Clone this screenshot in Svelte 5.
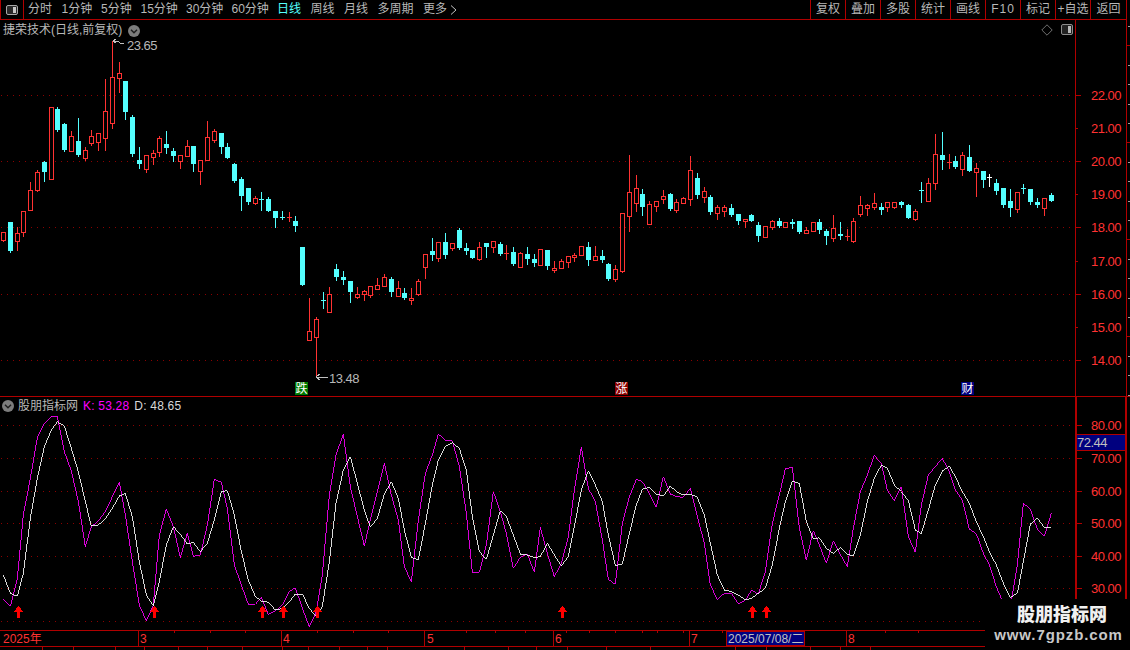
<script>
  const tabs = [
    { t: '分时', w: 24 }, { t: '1分钟', w: 30 }, { t: '5分钟', w: 30 }, { t: '15分钟', w: 36 },
    { t: '30分钟', w: 36 }, { t: '60分钟', w: 36 }, { t: '日线', w: 24, on: true }, { t: '周线', w: 24 },
    { t: '月线', w: 24 }, { t: '多周期', w: 36 }, { t: '更多', w: 24 }
  ];
  const tools = ['复权', '叠加', '多股', '统计', '画线', 'F10', '标记', '+自选', '返回'];

  // rows: [x, type, high, top, bottom, low], read at 3x from each region of the chart
  const seg = (ox, oy, rows) => rows.map(([x, t, h, a, b, l]) => ({
    x: Math.floor(ox + x / 3), t,
    h: Math.round(oy + h / 3), a: Math.round(oy + a / 3),
    b: Math.round(oy + b / 3), l: Math.round(oy + l / 3)
  }));
  const r = 'r', c = 'c', w = 'w';
  const candles = [
    ...seg(0, 40, [
      [10,r,576,576,600,603],[31,c,546,546,633,636],[52,r,562,580,602,630],[70,r,514,514,575,588],
      [91,r,427,451,509,509],[112,r,390,397,449,453],[133,c,363,366,396,423],[154,r,202,202,416,416],
      [172,c,201,207,270,273],[193,c,249,252,330,333],[214,r,273,289,332,332],[235,c,234,303,345,348],
      [256,r,321,331,353,360],[274,r,270,289,308,315],[295,r,279,280,305,330],[316,r,117,214,293,330],
      [337,r,3,112,250,264],[358,r,66,100,113,156],[376,c,123,123,216,237],[397,c,225,231,342,348],
      [418,c,321,360,372,384],[439,r,345,346,386,396],[460,r,330,340,351,372],[478,r,288,295,335,348],
      [499,c,273,312,324,339],[520,c,324,333,348,363],[541,r,345,346,364,384],[562,r,300,319,347,347],
      [580,c,318,318,372,393],[601,r,360,361,392,432],[622,r,243,292,360,360],[643,r,267,274,300,306],
      [664,c,279,279,321,339],[682,c,309,321,354,354],[703,c,369,372,423,426],[724,c,411,417,468,510],
      [745,c,444,444,486,492],[766,r,468,475,488,492],[784,c,456,477,480,510],[805,c,471,477,513,513],
      [826,c,513,513,534,561],[847,c,513,532,535,537],[868,r,516,532,535,543],[886,c,528,543,558,573]
    ]),
    ...seg(280, 180, [
      [67,c,201,201,315,315],[88,r,354,454,479,479],[109,r,411,418,470,590],[130,c,336,359,362,384],
      [148,r,321,343,395,395],[169,c,252,267,291,300],[190,c,273,291,300,312],[211,c,303,303,336,366],
      [232,r,321,343,351,354],[253,r,330,334,342,360],[271,r,318,319,344,351],[292,r,294,316,326,327],
      [313,r,282,292,317,318],[334,c,291,297,336,348],[355,r,303,325,347,348],[373,c,324,339,354,357],
      [394,r,324,355,361,372],[415,r,297,304,341,345],[436,r,222,223,260,294],[457,c,174,213,225,240],
      [475,r,186,187,233,243],[496,c,159,186,225,234],[517,r,189,190,203,210],[538,c,144,150,204,207],
      [559,c,189,204,213,222],[577,c,210,210,234,234],[598,r,186,202,236,240],[619,c,189,189,201,231],
      [640,r,183,184,201,216],[661,c,186,192,222,225],[679,r,195,220,223,237],[700,c,201,216,252,255],
      [721,r,216,220,260,261],[742,c,201,222,237,252],[763,c,222,237,249,258],[781,r,207,208,254,255],
      [802,c,210,210,258,267],[823,r,243,263,270,276],[844,r,237,244,263,264],[865,r,228,229,245,261],
      [883,r,219,224,230,243],[904,r,198,199,224,225],[925,c,186,201,240,255],[946,r,198,229,239,240],
      [967,c,210,228,240,246],[985,c,249,252,297,300],[1006,r,255,268,296,303],[1027,r,100,100,272,275]
    ]),
    ...seg(600, 120, [
      [88,r,105,217,287,333],[109,r,165,205,248,273],[127,c,207,222,261,285],[148,r,243,253,311,312],
      [169,r,243,244,258,273],[190,r,210,229,236,249],[211,c,219,222,267,270],[229,r,237,247,270,276],
      [250,r,232,233,248,249],[271,r,108,151,238,255],[292,c,159,174,225,234],[313,r,201,214,231,246],
      [331,c,225,231,276,282],[352,r,255,262,278,297],[373,r,255,262,272,288],[394,c,252,264,285,288],
      [415,c,282,282,303,312],[436,r,297,298,304,321],[454,c,282,285,303,303],[475,c,306,315,348,363],
      [496,r,318,319,350,351],[517,r,300,304,320,327],[538,c,294,303,318,321],[556,r,306,307,320,321],
      [577,c,297,306,312,324],[598,c,303,303,336,339],[619,r,321,331,338,339],[640,r,306,307,332,333],
      [658,c,297,306,330,339],[679,c,327,333,348,372],[700,r,285,325,353,363],[721,c,306,342,348,357],
      [742,r,327,348,351,360],[760,r,294,304,362,366],[781,r,228,256,282,288],[802,r,252,256,263,285],
      [823,r,219,250,261,267]
    ]),
    ...seg(880, 110, [
      [4,c,279,291,300,312],[22,r,276,277,292,303],[43,r,276,276,292,293],[64,c,273,277,286,291],
      [85,c,282,285,324,324],[106,r,297,304,326,329],[124,c,216,240,243,276],[145,r,204,220,272,273],
      [166,r,72,133,220,237],[187,c,66,135,150,177],[208,r,132,156,159,174],[226,c,138,153,171,174],
      [247,r,126,136,176,195],[268,c,105,141,183,183],[289,r,159,175,185,258],[310,c,183,183,210,231],
      [328,w,192,201,204,228],[349,c,207,219,243,252],[370,c,234,234,285,291],[391,c,237,273,294,318],
      [412,r,246,247,296,306],[430,c,222,234,237,249],[451,c,237,237,276,282],[472,c,264,276,285,291],
      [493,r,264,265,293,315],[514,c,249,255,273,273]
    ])
  ].map(k => ({ ...k, flat: k.b - k.a <= 1, tall: Math.max(1, k.b - k.a) }));

  const line = (...parts) => parts.flatMap(([ox, oy, p]) => {
    const out = [];
    for (let i = 0; i < p.length; i += 2) out.push(`${ox + p[i] / 3},${oy + p[i + 1] / 3}`);
    return out;
  }).join(' ');

  const kLine = line(
    [0, 395, [10,612,31,634,52,550,70,360,91,250,112,128,133,85,154,64,172,64,193,170,214,228,235,320,256,455,274,395,295,378,316,350,337,305,358,262,376,360,397,500,418,630,439,678,460,630,478,420,499,342,520,395,541,488,562,415,580,484,601,480,622,390,643,253,664,262,682,340,703,510,724,570,745,628,766,628,784,607,805,658,826,648,847,630,868,590,886,578,907,640,928,695,949,650,967,540,988,300]],
    [330, 420, [18,105,40,42,61,200,82,290,103,378,121,300,142,215,163,130,184,225,205,300,223,440,244,485,265,300,286,160,307,105,325,42,346,60,367,62,388,140,409,280,427,457,448,457,469,375,490,215,511,275,529,340,550,445,571,412,592,402,613,457,631,322,652,400,673,470,694,430,715,350,733,210,754,82,775,205,796,245,817,360,835,478,856,493,877,310,898,230,919,178,937,185,958,220,979,262,1000,170,1021,222,1039,230,1060,232,1081,205,1102,290,1123,370,1141,495,1162,538,1183,520]],
    [720, 395, [34,595,55,626,76,616,94,586,115,597,136,530,157,385,178,300,196,222,217,216,238,400,259,495,280,407,298,450,319,505,340,437,361,478,382,515,400,400,421,290,442,240,463,181,484,206,502,285,523,317,544,275,565,425,586,472,604,330,625,240,646,215,667,190,688,230,706,285,727,315,748,402,769,416,790,475,808,510,829,575,850,625,871,635,892,510,910,325,931,342,952,403,973,424,994,355]]
  );
  const dLine = line(
    [0, 395, [10,540,31,595,52,604,70,535,91,370,112,250,133,155,154,105,172,80,193,93,214,160,235,230,256,320,274,393,295,390,316,372,337,340,358,303,376,295,397,365,418,500,439,600,460,632,478,560,499,450,520,395,541,418,562,447,580,442,601,470,622,445,643,375,664,290,682,287,703,360,724,470,745,555,766,605,784,618,805,622,826,645,847,640,868,620,886,597,907,597,928,640,949,665,967,635,988,500]],
    [330, 420, [18,250,40,150,61,110,82,190,103,270,121,322,142,295,163,222,184,185,205,235,223,330,244,412,265,420,286,310,307,195,325,120,346,80,367,68,388,85,409,150,427,290,448,395,469,418,490,345,511,272,529,290,550,345,571,402,592,405,613,413,631,410,652,370,673,405,694,438,715,410,733,320,754,210,775,152,796,195,817,245,835,345,856,436,877,433,898,340,919,255,937,208,958,202,979,222,1000,228,1021,198,1039,215,1060,225,1081,222,1102,232,1123,285,1141,370,1162,465,1183,510]],
    [720, 395, [34,590,55,600,76,615,94,610,115,595,136,580,157,510,178,400,196,320,217,258,238,265,259,380,280,432,298,428,319,460,340,475,361,458,382,478,400,482,421,420,442,320,463,250,484,210,502,220,523,270,544,290,565,317,586,405,604,416,625,345,646,270,667,228,688,213,706,245,727,290,748,325,769,380,790,425,808,470,829,510,850,565,871,607,892,595,910,500,931,387,952,370,973,397,992,397]]
  );

  const priceAxis = [
    { v: '22.00', y: 95, big: true }, { v: '21.00', y: 128 }, { v: '20.00', y: 161, big: true },
    { v: '19.00', y: 194 }, { v: '18.00', y: 227, big: true }, { v: '17.00', y: 261 },
    { v: '16.00', y: 294, big: true }, { v: '15.00', y: 327 }, { v: '14.00', y: 360, big: true }
  ];
  const kdAxis = [
    { v: '80.00', y: 425 }, { v: '70.00', y: 458 }, { v: '60.00', y: 491 },
    { v: '50.00', y: 523 }, { v: '40.00', y: 556 }, { v: '30.00', y: 588 }
  ];
  const kdGrid = [...kdAxis.map(a => a.y), 621];
  const arrows = [18, 154, 262, 283, 317, 562, 752, 766];
  const flags = [
    { t: '跌', x: 295, cls: 'down' }, { t: '涨', x: 615, cls: 'up' }, { t: '财', x: 961, cls: 'news' }
  ];
  const stripTicks = Array.from({ length: 22 }, (_, i) => ({ y: Math.round(26 + i * 19.4), major: i % 5 === 1 }));

  const months = [
    { t: '2025年', x: 3 }, { t: '3', x: 140, sep: 138 }, { t: '4', x: 283, sep: 281 }, { t: '5', x: 427, sep: 424 },
    { t: '6', x: 555, sep: 553 }, { t: '7', x: 691, sep: 689 }, { t: '8', x: 848, sep: 846 }
  ];
  const upTicks = [174, 210, 245, 317, 353, 388, 466, 495, 525, 566, 589, 615, 642, 657, 683, 722, 885, 918];
  const downTicks = [42, 73, 115, 144, 178, 207, 242, 282, 308, 339, 367, 387, 464, 508, 536, 567, 606, 650, 735, 766, 810, 840, 870];
</script>

<div class="app">
  <header class="toolbar">
    <div class="side-btn">
      <svg class="toggle" viewBox="0 0 12 10" width="12" height="10">
        <rect x=".5" y=".5" width="11" height="9" rx="1.5" fill="#2a2a2a" stroke="#a8a8a8" />
        <rect x="7" y="2" width="3" height="6" fill="#c8c8c8" />
      </svg>
    </div>
    <nav class="tabs">
      {#each tabs as tab}
        <span class="tab" class:on={tab.on} style:width="{tab.w}px">{tab.t}</span>
      {/each}
      <svg class="more" viewBox="0 0 7 10" width="7" height="10"><path d="M1 .5 6 5 1 9.500" fill="none" stroke="#c0c0c0" /></svg>
    </nav>
    <div class="tools">
      {#each tools as tool}
        <span class="tool" class:wide={tool === 'F10'}>{tool}</span>
      {/each}
    </div>
  </header>

  <section class="panel main">
    <div class="plot">
      <div class="title">
        <span>捷荣技术(日线,前复权)</span>
        <svg class="round" viewBox="0 0 12 12" width="12" height="12">
          <circle cx="6" cy="6" r="6" fill="#7c7c7c" />
          <path d="M3 4.800 6 7.800 9 4.800" fill="none" stroke="#1c1c1c" stroke-width="1.400" />
        </svg>
      </div>
      <div class="corner">
        <svg viewBox="0 0 12 12" width="12" height="12"><path d="M6 .8 11.200 6 6 11.200 .8 6Z" fill="none" stroke="#707070" /></svg>
        <svg viewBox="0 0 12 12" width="12" height="12">
          <rect x=".5" y=".5" width="11" height="10" rx="1.500" fill="#222" stroke="#8c8c8c" />
          <rect x="7" y="2" width="3" height="7" fill="#b8b8b8" />
        </svg>
      </div>
      <svg class="canvas" viewBox="0 20 1075 376" width="1075" height="376">
        {#each priceAxis.filter(a => a.big) as a}
          <line class="grid" x1="1" x2="1075" y1={a.y + .5} y2={a.y + .5} />
        {/each}
        {#each candles as k}
          <rect class="k-{k.t}" x={k.x} y={k.h} width="1" height={k.l - k.h + 1} />
          {#if k.flat}
            <rect class="k-{k.t}" x={k.x - 2} y={k.a} width="5" height="1" />
          {:else if k.t === 'r'}
            <rect class="hollow" x={k.x - 1.5} y={k.a + .5} width="4" height={k.tall} />
          {:else}
            <rect class="k-{k.t}" x={k.x - 2} y={k.a} width="5" height={k.tall} />
          {/if}
        {/each}
        <path class="lead" d="M113 41 116 39M113 41 116 43M113 41H118L120 43H124" />
        <text class="note" x="127" y="50">23.65</text>
        <path class="lead" d="M316 377H328M316 377 320 374M316 377 320 380" />
        <text class="note" x="329" y="383">13.48</text>
        {#each flags as f}
          <g>
            <rect class="flag {f.cls}" x={f.x} y="382" width="13" height="13" />
            <text class="flag-text" x={f.x + 6.500} y="393">{f.t}</text>
          </g>
        {/each}
      </svg>
    </div>
    <div class="yaxis">
      <svg viewBox="1076 20 50 376" width="50" height="376">
        {#each priceAxis as a}
          <rect class="tick" x="1076" y={a.y} width={a.big ? 5 : 2} height="1" />
          <text class="label" x="1091" y={a.y + 5}>{a.v}</text>
        {/each}
      </svg>
    </div>
    <div class="strip">
      <svg viewBox="0 20 3 376" width="3" height="376">
        {#each stripTicks as s}
          <rect class={s.major ? 'tick' : 'minor'} x={s.major ? 0 : 1} y={s.y} width="3" height="1" />
        {/each}
      </svg>
    </div>
  </section>

  <section class="panel kd">
    <div class="plot">
      <div class="kd-head">
        <svg class="round" viewBox="0 0 12 12" width="12" height="12">
          <circle cx="6" cy="6" r="6" fill="#7c7c7c" />
          <path d="M3 4.800 6 7.800 9 4.800" fill="none" stroke="#1c1c1c" stroke-width="1.400" />
        </svg>
        <span class="kd-name">股朋指标网</span>
        <span class="kd-k">K: 53.28</span>
        <span class="kd-d">D: 48.65</span>
      </div>
      <svg class="canvas" viewBox="0 397 1075 233" width="1075" height="233">
        {#each kdGrid as y}
          <line class="grid" x1="1" x2="1075" y1={y + .5} y2={y + .5} />
        {/each}
        <polyline class="k-line" points={kLine} />
        <polyline class="d-line" points={dLine} />
        {#each arrows as x}
          <path class="arrow" d="M{x + .5} 606 {x + 5.500} 612H{x + 2}V618H{x - 1}V612H{x - 4.500}Z" />
        {/each}
      </svg>
    </div>
    <div class="yaxis thick">
      <svg viewBox="1077 397 48 233" width="48" height="233">
        {#each kdAxis as a}
          <rect class="tick" x="1077" y={a.y} width="5" height="1" />
          <text class="label" x="1091" y={a.y + 5}>{a.v}</text>
        {/each}
        <rect class="cur" x="1077" y="434" width="48" height="17" />
        <line class="rule" x1="1077" x2="1125" y1="434.500" y2="434.500" />
        <line class="rule" x1="1077" x2="1125" y1="450.500" y2="450.500" />
        <text class="cur-text" x="1077" y="447">72.44</text>
      </svg>
    </div>
  </section>

  <footer class="time">
    <svg viewBox="0 630 1075 20" width="1075" height="20">
      <line class="rule" x1="0" x2="1075" y1="630.500" y2="630.500" />
      <line class="rule" x1="0" x2="1075" y1="646.500" y2="646.500" />
      {#each upTicks as x}<rect class="tick" x={x} y="631" width="1" height="2" />{/each}
      {#each downTicks as x}<rect class="tick" x={x} y="647" width="1" height="3" />{/each}
      {#each months as m}
        {#if m.sep}<rect class="tick" x={m.sep} y="631" width="1" height="15" />{/if}
        <text class="month" x={m.x} y="643">{m.t}</text>
      {/each}
      <rect class="date-box" x="726.500" y="631.500" width="78" height="14" />
      <text class="date" x="728" y="643">2025/07/08/二</text>
    </svg>
  </footer>

  <aside class="mark">
    <strong>股朋指标网</strong>
    <b>www.7gpzb.com</b>
  </aside>
</div>

<style>
  :global(body) { margin: 0; background: #000; }
  .app {
    position: relative; width: 1130px; height: 650px; overflow: hidden; background: #000;
    display: flex; flex-direction: column;
    font: 12px "Liberation Sans", "Noto Sans CJK SC", sans-serif; color: #b8b8b8;
  }
  svg { display: block; }
  .toolbar {
    display: flex; align-items: center; flex: 0 0 20px; box-sizing: border-box; height: 20px;
    width: 1127px; border-bottom: 1px solid #b00000;
  }
  .side-btn {
    display: flex; align-items: center; justify-content: center; box-sizing: border-box;
    width: 24px; height: 19px; border-right: 1px solid #b00000; border-left: 1px solid #b00000;
  }
  .tabs { display: flex; align-items: center; gap: 9.500px; margin-left: 4px; }
  .tab { white-space: nowrap; line-height: 19px; }
  .tab.on { color: #54ffff; }
  .more { margin-left: -6.500px; }
  .tools { display: flex; margin-left: auto; }
  .tool {
    box-sizing: border-box; width: 35px; height: 19px; line-height: 19px; text-align: center;
    border-left: 1px solid #b00000; white-space: nowrap;
  }
  .tool:last-child { width: 37px; border-right: 1px solid #b00000; }
  .tool.wide { letter-spacing: 1px; }

  .panel { display: flex; }
  .main { flex: 0 0 377px; box-sizing: border-box; border-bottom: 1px solid #b00000; }
  .kd { flex: 0 0 233px; }
  .plot { position: relative; flex: 0 0 1075px; }
  .yaxis { flex: 0 0 50px; border-left: 1px solid #b00000; }
  .strip { flex: 0 0 3px; border-left: 1px solid #b00000; }
  .yaxis.thick {
    flex: 0 0 48px; border-left: 2px solid #b00000; border-right: 2px solid #b00000;
  }
  .canvas, .yaxis svg, .strip svg, .time svg { shape-rendering: crispEdges; }

  .title {
    position: absolute; left: 3px; top: 2px; display: flex; align-items: center; gap: 6px;
    line-height: 17px; z-index: 1; white-space: nowrap;
  }
  .corner { position: absolute; right: 2px; top: 4px; display: flex; gap: 8px; z-index: 1; }
  .kd-head {
    position: absolute; left: 2px; top: 2px; display: flex; align-items: center;
    line-height: 14px; z-index: 1; white-space: nowrap;
  }
  .kd-name { margin-left: 4px; }
  .kd-k { margin-left: 5px; color: #ff00ff; letter-spacing: .2px; }
  .kd-d { margin-left: 5px; color: #d8d8d8; letter-spacing: .2px; }

  .grid { stroke: #8b0000; stroke-width: 1; stroke-dasharray: 1 5; }
  .k-r { fill: #ff3232; }
  .k-c { fill: #54ffff; }
  .k-w { fill: #ffffff; }
  .hollow { fill: #000; stroke: #ff3232; stroke-width: 1; }
  .lead { fill: none; stroke: #c0c0c0; stroke-width: 1; }
  .note { fill: #b8b8b8; font-size: 13px; letter-spacing: -.5px; }
  .flag.down { fill: #007a00; }
  .flag.up { fill: #8a0000; }
  .flag.news { fill: #00007f; }
  .flag-text { fill: #fff; font-size: 12px; text-anchor: middle; }
  .tick { fill: #b00000; }
  .minor { fill: #a0a0a0; }
  .rule { stroke: #b00000; stroke-width: 1; }
  .label { fill: #ff3232; font-size: 13px; letter-spacing: -.5px; }
  .cur { fill: #00007f; }
  .cur-text { fill: #c0c0c0; font-size: 13px; letter-spacing: -.5px; }
  .k-line { fill: none; stroke: #ff00ff; stroke-width: .85; }
  .d-line { fill: none; stroke: #ffffff; stroke-width: .85; }
  .arrow { fill: #ff0000; }

  .time { flex: 0 0 20px; }
  .month { fill: #ff3232; font-size: 12px; }
  .date-box { fill: #00007f; stroke: #b00000; stroke-width: 1; }
  .date { fill: #c0c0c0; font-size: 12px; }

  .mark {
    position: absolute; left: 985px; top: 599px; width: 145px; height: 51px; background: #000;
    display: flex; flex-direction: column; align-items: center; font-weight: 700; z-index: 2;
  }
  .mark strong { margin: 6px 0 0 9px; font-size: 18px; line-height: 20px; color: #f0f0f0; }
  .mark b { margin: 1px 0 0 2px; font-size: 15px; line-height: 17px; letter-spacing: .9px; color: #c8c8c8; white-space: nowrap; }
</style>
